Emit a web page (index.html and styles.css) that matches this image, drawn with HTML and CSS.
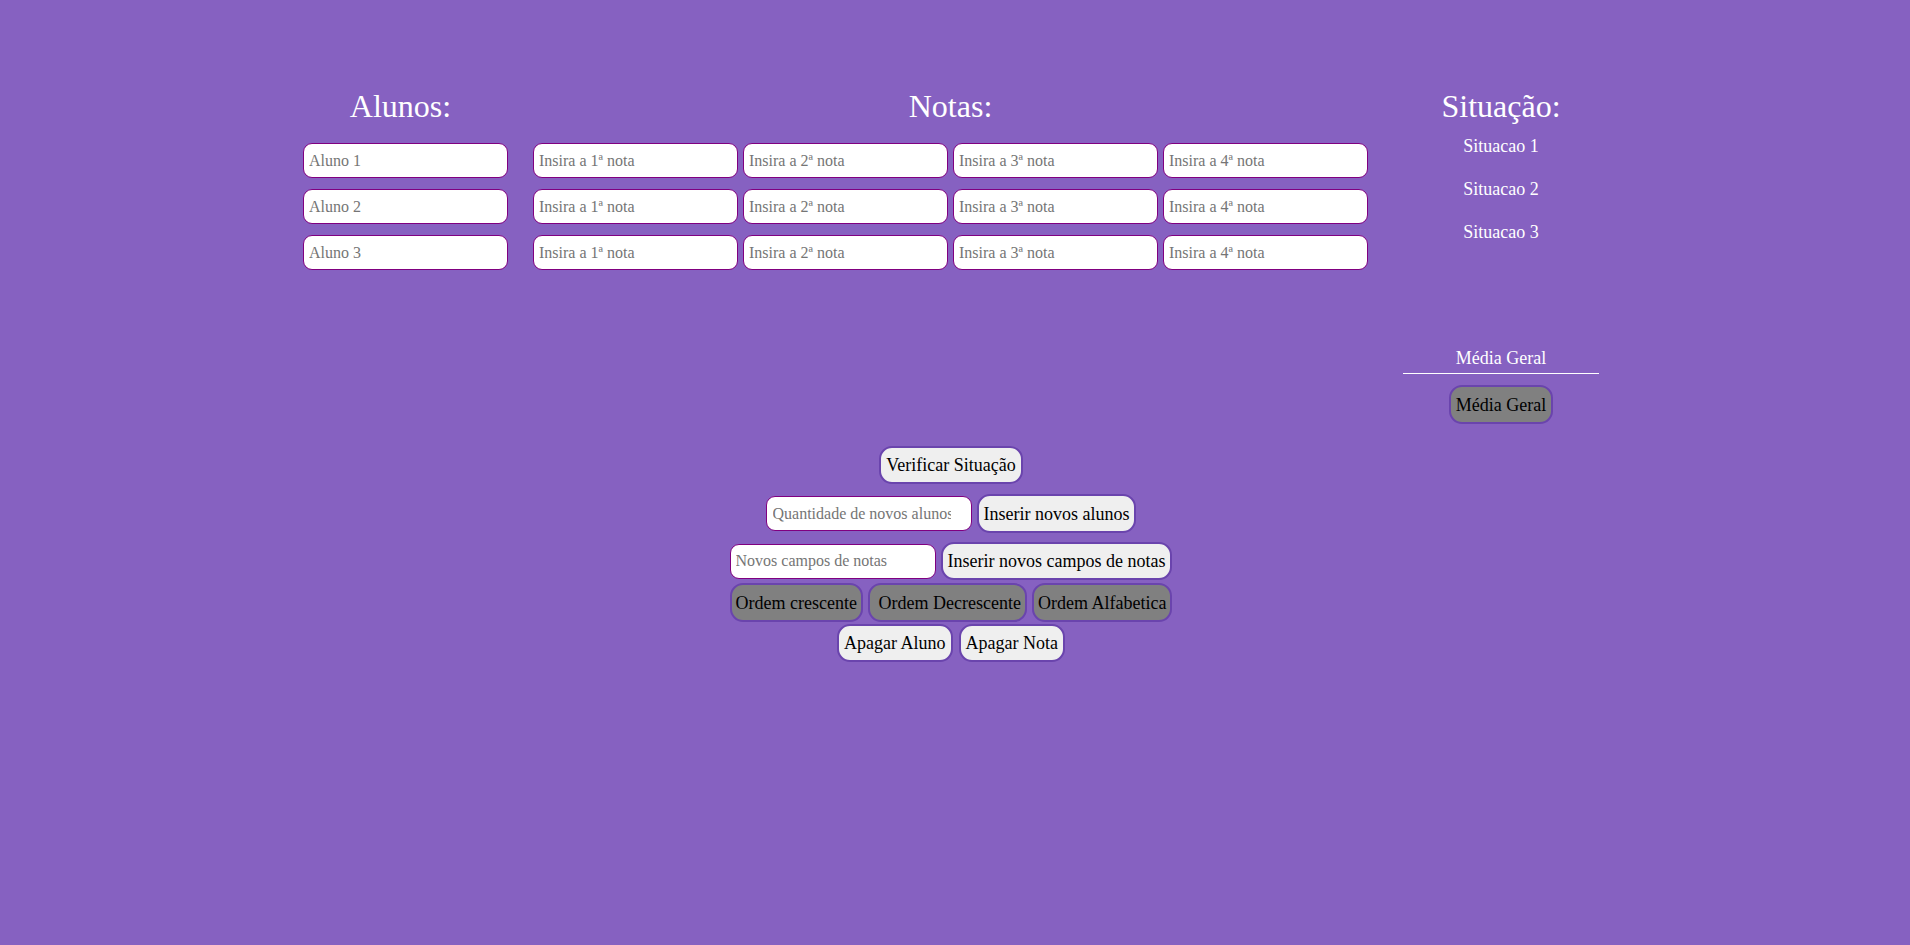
FILE: index.html
```html
<!DOCTYPE html>
<html lang="pt-BR">
<head>
<meta charset="utf-8">
<title>Notas</title>
<link rel="stylesheet" href="styles.css">
</head>
<body>
<div class="main">
  <div class="col col-alunos">
    <h1 class="title title-alunos">Alunos:</h1>
    <div class="stack">
      <input class="field" type="text" placeholder="Aluno 1">
      <input class="field" type="text" placeholder="Aluno 2">
      <input class="field" type="text" placeholder="Aluno 3">
    </div>
  </div>
  <div class="col col-notas">
    <h1 class="title">Notas:</h1>
    <div class="grid">
      <input class="field" type="text" placeholder="Insira a 1ª nota">
      <input class="field" type="text" placeholder="Insira a 2ª nota">
      <input class="field" type="text" placeholder="Insira a 3ª nota">
      <input class="field" type="text" placeholder="Insira a 4ª nota">
      <input class="field" type="text" placeholder="Insira a 1ª nota">
      <input class="field" type="text" placeholder="Insira a 2ª nota">
      <input class="field" type="text" placeholder="Insira a 3ª nota">
      <input class="field" type="text" placeholder="Insira a 4ª nota">
      <input class="field" type="text" placeholder="Insira a 1ª nota">
      <input class="field" type="text" placeholder="Insira a 2ª nota">
      <input class="field" type="text" placeholder="Insira a 3ª nota">
      <input class="field" type="text" placeholder="Insira a 4ª nota">
    </div>
  </div>
  <div class="col col-sit">
    <h1 class="title">Situação:</h1>
    <div class="sit-list">
      <p class="sit-item">Situacao 1</p>
      <p class="sit-item">Situacao 2</p>
      <p class="sit-item">Situacao 3</p>
    </div>
    <p class="media-label">Média Geral</p>
    <button class="btn btn-gray btn-media">Média Geral</button>
  </div>
</div>
<div class="actions">
  <div class="row row-1">
    <button class="btn">Verificar Situação</button>
  </div>
  <div class="row row-2">
    <input class="field" type="number" placeholder="Quantidade de novos alunos">
    <button class="btn">Inserir novos alunos</button>
  </div>
  <div class="row row-3">
    <input class="field" type="number" placeholder="Novos campos de notas">
    <button class="btn">Inserir novos campos de notas</button>
  </div>
  <div class="row row-4">
    <button class="btn btn-gray">Ordem crescente</button>
    <button class="btn btn-gray">&nbsp;Ordem Decrescente</button>
    <button class="btn btn-gray">Ordem Alfabetica</button>
  </div>
  <div class="row row-5">
    <button class="btn">Apagar Aluno</button>
    <button class="btn">Apagar Nota</button>
  </div>
</div>
</body>
</html>
```
FILE: styles.css
```css
html, body {
  margin: 0;
  padding: 0;
}

body {
  background: #8661c1;
  font-family: "Liberation Serif", "Times New Roman", serif;
  color: #ffffff;
  min-height: 945px;
}

.main {
  display: flex;
  justify-content: center;
  align-items: flex-start;
  padding-top: 88px;
  padding-right: 8px;
}

.col {
  display: flex;
  flex-direction: column;
  align-items: center;
}

.col-alunos {
  width: 205px;
  margin-right: 25px;
}

.col-notas {
  width: 835px;
  margin-right: 35px;
}

.col-sit {
  width: 196px;
}

.title {
  margin: 0 0 19px 0;
  font-size: 32px;
  line-height: 36px;
  font-weight: normal;
  color: #ffffff;
}

.title-alunos {
  padding-right: 10px;
}

.stack {
  display: flex;
  flex-direction: column;
  gap: 11px;
}

.grid {
  display: grid;
  grid-template-columns: repeat(4, 205px);
  column-gap: 5px;
  row-gap: 11px;
}

.field {
  box-sizing: border-box;
  width: 205px;
  height: 35px;
  margin: 0;
  padding: 0 5px;
  border: 1px solid #800080;
  border-radius: 9px;
  background: #ffffff;
  font-family: "Liberation Serif", "Times New Roman", serif;
  font-size: 16px;
  color: #000000;
  outline: none;
}

.field::placeholder {
  color: #757575;
}

.sit-list {
  display: flex;
  flex-direction: column;
  gap: 22px;
  margin-top: -7px;
}

.sit-item {
  margin: 0;
  font-size: 18px;
  line-height: 21px;
  text-align: center;
}

.media-label {
  width: 196px;
  margin: 105px 0 0 0;
  padding-bottom: 4px;
  border-bottom: 1px solid #ffffff;
  font-size: 18px;
  line-height: 21px;
  text-align: center;
}

.btn {
  box-sizing: border-box;
  height: 38px;
  margin: 0;
  padding: 1px 5px 0 5px;
  border: 2px solid #6a44ad;
  border-radius: 13px;
  background: #efefef;
  font-family: "Liberation Serif", "Times New Roman", serif;
  font-size: 18px;
  color: #000000;
  white-space: nowrap;
}

.btn-gray {
  background: #808080;
}

.btn-media {
  height: 39px;
  margin-top: 11px;
}

.actions {
  display: flex;
  flex-direction: column;
  align-items: center;
  margin-top: 22px;
  padding-right: 8px;
}

.row {
  display: flex;
  align-items: center;
  gap: 5px;
}

.row-2 {
  margin-top: 10px;
}

.row-2 .field {
  width: 206px;
  padding-left: 6px;
}

.row-2 .btn {
  height: 39px;
}

.row-3 {
  margin-top: 9px;
}

.row-3 .field {
  width: 206px;
}

.row-4 {
  margin-top: 3px;
}

.row-4 .btn {
  height: 39px;
  padding-left: 4px;
  padding-right: 4px;
}

.row-5 {
  margin-top: 2px;
  gap: 6px;
}
```
